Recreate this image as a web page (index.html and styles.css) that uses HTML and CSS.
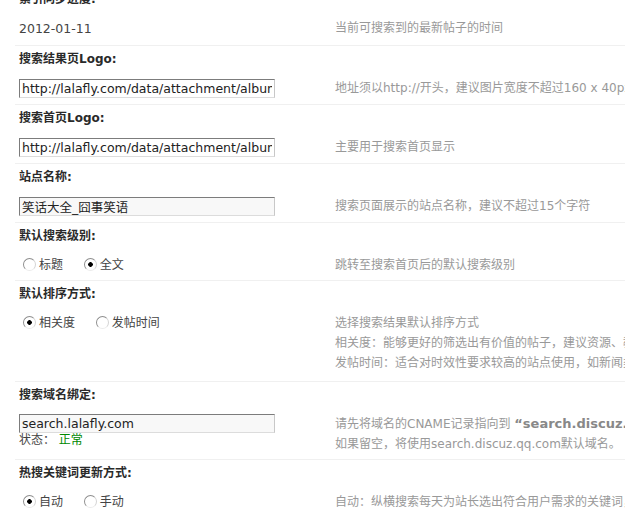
FILE: index.html
```html
<!DOCTYPE html>
<html lang="zh-CN">
<head>
  <meta charset="UTF-8">
  <title>纵横搜索设置</title>
  <link rel="stylesheet" href="styles.css">
</head>
<body>
<div class="wrap">
  <table class="tb">
    <tr class="hd first"><td colspan="2">索引同步进度:</td></tr>
    <tr class="row">
      <td class="form"><span class="val">2012-01-11</span></td>
      <td class="tips">当前可搜索到的最新帖子的时间</td>
    </tr>

    <tr class="hd"><td colspan="2">搜索结果页Logo:</td></tr>
    <tr class="row">
      <td class="form"><input class="txt" type="text" value="http://lalafly.com/data/attachment/album/logo_result.png"></td>
      <td class="tips">地址须以http://开头，建议图片宽度不超过160 x 40px</td>
    </tr>

    <tr class="hd"><td colspan="2">搜索首页Logo:</td></tr>
    <tr class="row">
      <td class="form"><input class="txt" type="text" value="http://lalafly.com/data/attachment/album/logo_index.png"></td>
      <td class="tips">主要用于搜索首页显示</td>
    </tr>

    <tr class="hd"><td colspan="2">站点名称:</td></tr>
    <tr class="row">
      <td class="form"><input class="txt grey" type="text" value="笑话大全_囧事笑语"></td>
      <td class="tips">搜索页面展示的站点名称，建议不超过15个字符</td>
    </tr>

    <tr class="hd"><td colspan="2">默认搜索级别:</td></tr>
    <tr class="row">
      <td class="form">
        <label class="opt"><input type="radio" name="level">标题</label>
        <label class="opt"><input type="radio" name="level" checked>全文</label>
      </td>
      <td class="tips">跳转至搜索首页后的默认搜索级别</td>
    </tr>

    <tr class="hd"><td colspan="2">默认排序方式:</td></tr>
    <tr class="row">
      <td class="form">
        <label class="opt"><input type="radio" name="order" checked>相关度</label>
        <label class="opt"><input type="radio" name="order">发帖时间</label>
      </td>
      <td class="tips multi">选择搜索结果默认排序方式<br>相关度：能够更好的筛选出有价值的帖子，建议资源、教程类站点使用<br>发帖时间：适合对时效性要求较高的站点使用，如新闻类站点</td>
    </tr>

    <tr class="hd"><td colspan="2">搜索域名绑定:</td></tr>
    <tr class="row">
      <td class="form domain">
        <input class="txt grey" type="text" value="search.lalafly.com">
        <div class="status">状态： <span class="ok">正常</span></div>
      </td>
      <td class="tips">请先将域名的CNAME记录指向到 <b>“search.discuz.qq.com”</b><br>如果留空，将使用search.discuz.qq.com默认域名。</td>
    </tr>

    <tr class="hd"><td colspan="2">热搜关键词更新方式:</td></tr>
    <tr class="row">
      <td class="form">
        <label class="opt"><input type="radio" name="hot" checked>自动</label>
        <label class="opt"><input type="radio" name="hot">手动</label>
      </td>
      <td class="tips">自动：纵横搜索每天为站长选出符合用户需求的关键词，并自动更新</td>
    </tr>
  </table>
</div>
</body>
</html>
```

FILE: styles.css
```css
body {
  margin: 0;
  overflow: hidden;
  background: #fff;
  color: #333;
  font: 12px "DejaVu Sans", "Noto Sans CJK SC", sans-serif;
}
.wrap {
  margin: -14px 0 0 15px;
}
.tb {
  border-collapse: collapse;
  width: 1000px;
}
.tb td {
  padding: 0;
  vertical-align: top;
}
/* 标题行 */
.hd td {
  border-top: 1px solid #f0f0f0;
  padding: 3px 0 7px 4px;
  line-height: 20px;
  font-weight: bold;
  color: #2a2a2a;
}
.hd.first td {
  border-top: none;
}
.form {
  width: 312px;
  padding: 3px 0 6px 4px !important;
  line-height: 18px;
}
.form.domain {
  padding-top: 2px !important;
}
.tips {
  padding: 2px 0 5px 4px !important;
  line-height: 20px;
  color: #999;
  white-space: nowrap;
}
.tips.multi {
  padding-bottom: 8px !important;
}
.tips b {
  color: #888;
  font-size: 13px;
}
.val {
  font-size: 12.5px;
  color: #444;
  line-height: 20px;
}
/* 输入框 */
.txt {
  display: block;
  box-sizing: border-box;
  width: 256px;
  height: 19px;
  margin: 0;
  padding: 0 2px;
  border: 1px solid;
  border-color: #7c7c7c #c8c8c8 #dcdcdc #7c7c7c;
  background: #fff;
  color: #222;
  font: 12.5px "DejaVu Sans", "Noto Sans CJK SC", sans-serif;
  outline: none;
}
.txt.grey {
  background: #f8f8f8;
}
.status {
  line-height: 14px;
  color: #444;
}
.ok {
  color: #080;
}
/* 单选框 */
.opt {
  margin-right: 13px;
  color: #444;
}
.opt input {
  -webkit-appearance: none;
  appearance: none;
  width: 13px;
  height: 13px;
  margin: 0 3px 0 4px;
  border: 1px solid;
  border-color: #8e8e8e #d4d4d4 #ececec #8e8e8e;
  border-radius: 50%;
  background: #fff;
  vertical-align: -2px;
  box-sizing: border-box;
}
.opt input:checked {
  background: radial-gradient(circle, #000 0, #000 2px, #fff 2.6px);
}
```
